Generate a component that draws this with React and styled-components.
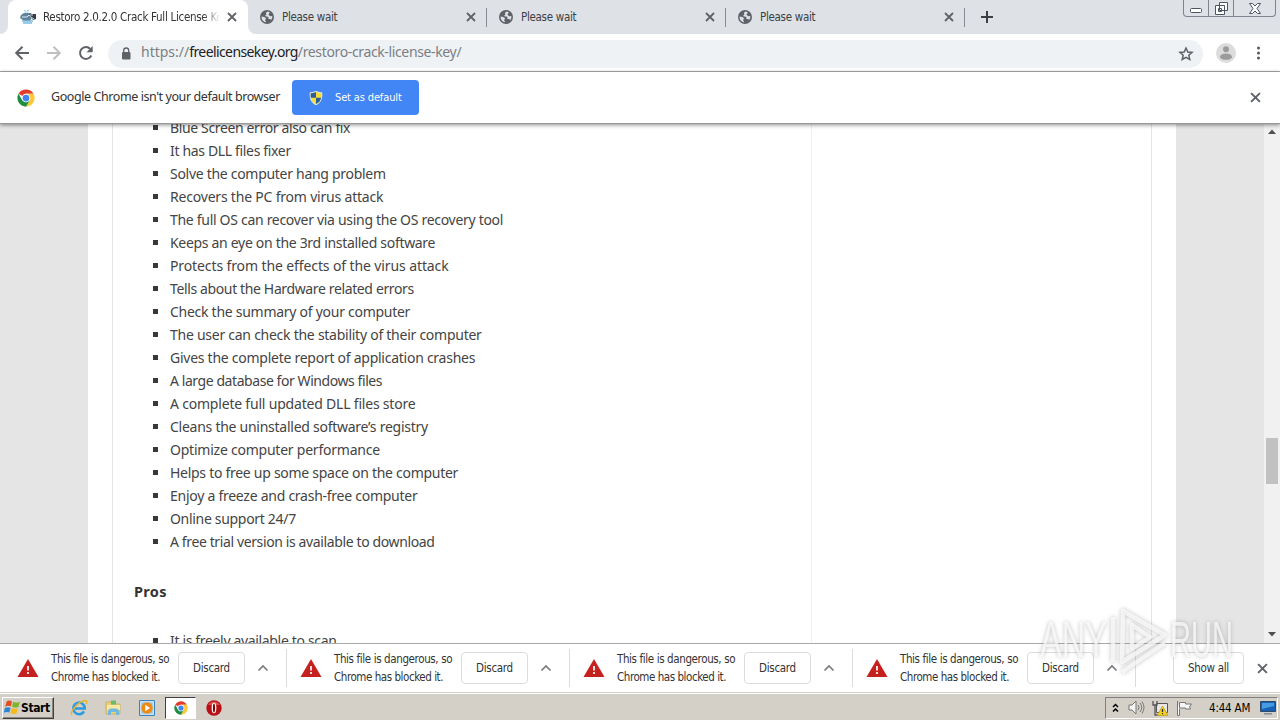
import React from "react";
import styled, { createGlobalStyle, css } from "styled-components";

const Global = createGlobalStyle`
  * { box-sizing: border-box; }
  html, body { margin: 0; padding: 0; overflow: hidden; }
  body { width: 1280px; height: 720px; }
`;

const ui = css`
  font-family: "DejaVu Sans Condensed", "DejaVu Sans", sans-serif;
  font-stretch: condensed;
  font-size: 11px;
  white-space: nowrap;
`;

const Screen = styled.div`
  ${ui}
  position: relative;
  width: 1280px;
  height: 720px;
  display: flex;
  flex-direction: column;
  overflow: hidden;
  background: #fff;
  color: #333;
`;

/* ---- tab strip ---- */
const TabStrip = styled.header`
  flex: none;
  height: 34px;
  display: flex;
  background: #dee1e6;
`;

const StripEdge = styled.div`
  width: 8px;
  background: #fff;
  &::before {
    content: "";
    display: block;
    height: 34px;
    background: #dee1e6;
    border-bottom-right-radius: 8px;
  }
`;

const ActiveTab = styled.div`
  width: 240px;
  height: 34px;
  display: flex;
  align-items: center;
  padding: 0 11px 0 12px;
  background: #fff;
  border-radius: 8px 8px 0 0;
`;

const Tab = styled.div`
  width: 239px;
  height: 34px;
  display: flex;
  align-items: center;
  padding-left: 12px;
  color: #3c4043;
  background: #dee1e6;
  ${(p) => p.$first && "border-bottom-left-radius: 8px;"}
`;

const TabBacking = styled.div`
  background: linear-gradient(90deg, #fff 10px, transparent 10px);
`;

const TabTitle = styled.span`
  flex: 1;
  overflow: hidden;
  margin-left: ${(p) => (p.$active ? 7 : 8)}px;
  margin-right: ${(p) => (p.$active ? 8 : 0)}px;
  letter-spacing: -0.3px;
  font-size: 11.5px;
  ${(p) => p.$active && "mask-image: linear-gradient(90deg, #000 160px, transparent 177px);"}
`;

const Divider = styled.div`
  width: 1px;
  height: 19px;
  background: #878b92;
  margin-left: 10px;
  flex: none;
`;

const NewTab = styled.div`
  display: flex;
  align-items: center;
  padding-left: 16px;
  flex: 1;
`;

const WindowControls = styled.div`
  display: flex;
  width: 93px;
  height: 17px;
  margin-right: 4px;
  border: 1px solid #7e838d;
  border-top: 0;
  border-radius: 0 0 4px 4px;
`;

const WindowButton = styled.div`
  width: ${(p) => p.$w}px;
  display: flex;
  align-items: center;
  justify-content: center;
  & + & { border-left: 1px solid #7e838d; }
`;

/* ---- toolbar ---- */
const Toolbar = styled.div`
  flex: none;
  height: 38px;
  display: flex;
  align-items: center;
  padding: 0 12px 0 14px;
  border-bottom: 1px solid #a9a9a9;
`;

const NavIcons = styled.div`
  display: flex;
  gap: 16px;
  width: 94px;
`;

const AddressBar = styled.div`
  width: 1095px;
  height: 28px;
  margin-top: 2px;
  display: flex;
  align-items: center;
  padding: 0 9px 0 11px;
  border-radius: 14px;
  background: #eff2f5;
`;

const Url = styled.div`
  flex: 1;
  margin-left: 8px;
  margin-top: -4px;
  font: 14px "Noto Sans", sans-serif;
  color: #7b7f84;
`;

const UrlPart = styled.span`
  letter-spacing: ${(p) => p.$track}px;
  ${(p) => p.$host && "color: #202124;"}
`;

const ToolbarEnd = styled.div`
  display: flex;
  align-items: center;
  gap: 15px;
  margin-left: 13px;
`;

/* ---- default browser notice ---- */
const Notice = styled.div`
  position: relative;
  z-index: 1;
  flex: none;
  height: 52px;
  display: flex;
  align-items: center;
  padding: 0 19px 0 17px;
  background: #fff;
  border-bottom: 1px solid #989898;
  box-shadow: 0 1px 4px rgba(0, 0, 0, 0.45);
`;

const NoticeText = styled.span`
  flex: none;
  width: 257px;
  padding-left: 16px;
  margin-top: -2px;
  font: 12.5px "Noto Sans", sans-serif;
  letter-spacing: -0.42px;
`;

const DefaultButton = styled.div`
  width: 127px;
  height: 35px;
  display: flex;
  align-items: center;
  padding-left: 17px;
  gap: 12px;
  color: #fff;
  background: #4285f4;
  border-radius: 4px;
  letter-spacing: -0.14px;
`;

const Spacer = styled.div`
  flex: 1;
`;

/* ---- page ---- */
const Viewport = styled.main`
  flex: none;
  height: 519px;
  display: flex;
  overflow: hidden;
  background: #e5e5e5;
`;

const Sheet = styled.div`
  width: 1088px;
  margin-left: 88px;
  padding: 0 24px;
  background: #fff;
`;

const Columns = styled.div`
  display: flex;
  height: 100%;
  border: solid #e4e4e4;
  border-width: 0 1px;
`;

const Article = styled.article`
  width: 699px;
  padding-left: 21px;
  border-right: 1px solid #efefef;
  color: #444;
  font: 14px/23px "Noto Sans", sans-serif;
`;

const List = styled.ul`
  list-style: none;
  margin: ${(p) => p.$top}px 0 0;
  padding: 0 0 0 18px;
`;

const Item = styled.li`
  display: flex;
  align-items: center;
  height: 23px;
  letter-spacing: ${(p) => p.$track}px;
  &::before {
    content: "";
    width: 5px;
    height: 5px;
    margin: 0 12px 0 1px;
    background: #383838;
  }
`;

const Heading = styled.h3`
  margin: 25px 0 0;
  font-size: 14.5px;
  line-height: 26px;
  letter-spacing: 0.3px;
  color: #333;
`;

const Scrollbar = styled.div`
  width: 16px;
  margin-left: auto;
  display: flex;
  flex-direction: column;
  align-items: center;
  padding: 5px 0 6px;
  background: #f1f1f1;
`;

const Thumb = styled.div`
  width: 12px;
  height: 46px;
  margin: 304px 0 auto;
  background: #c1c1c1;
`;

/* ---- downloads ---- */
const Shelf = styled.footer`
  flex: none;
  height: 49px;
  display: flex;
  align-items: center;
  border-top: 1px solid #a9a9a9;
`;

const Download = styled.div`
  width: ${(p) => (p.$first ? 287 : 283)}px;
  height: 38px;
  display: flex;
  align-items: center;
  padding-left: ${(p) => (p.$first ? 17 : 13)}px;
  border-right: 1px solid #dcdcdc;
`;

const Warning = styled.div`
  width: 127px;
  margin-left: 12px;
  line-height: 18px;
  font-size: 11.5px;
`;

const WarningLine = styled.div`
  letter-spacing: ${(p) => p.$track}px;
`;

const ShelfButton = styled.div`
  width: ${(p) => p.$w || 67}px;
  height: 32px;
  display: flex;
  align-items: center;
  justify-content: center;
  border: 1px solid #dadce0;
  border-radius: 4px;
  font-size: 11.5px;
  letter-spacing: -0.3px;
`;

const Chevron = styled.span`
  display: flex;
  margin-left: 12px;
`;

const ShelfEnd = styled.div`
  display: flex;
  align-items: center;
  margin-left: 37px;
  gap: 13px;
`;

/* ---- taskbar ---- */
const Taskbar = styled.div`
  flex: none;
  height: 28px;
  display: flex;
  align-items: center;
  padding: 2px 2px 0;
  background: #d4d0c8;
  border-top: 1px solid #d4d0c8;
  box-shadow: inset 0 1px #fff;
  color: #000;
`;

const Start = styled.div`
  width: 52px;
  height: 22px;
  display: flex;
  align-items: center;
  padding-left: 1px;
  border: 1px solid;
  border-color: #fff #404040 #404040 #fff;
  box-shadow: inset -1px -1px #8a8780;
  font-weight: 700;
  font-size: 12px;
  letter-spacing: -0.4px;
`;

const Launchers = styled.div`
  display: flex;
  align-items: center;
  margin-left: 8px;
`;

const Launcher = styled.div`
  width: ${(p) => (p.$active ? 31 : 34)}px;
  height: 22px;
  display: flex;
  align-items: center;
  justify-content: center;
  ${(p) =>
    p.$active &&
    css`
      margin: 0 1px;
      background: #fff;
      border: 1px solid;
      border-color: #404040 #fff #fff #404040;
    `}
`;

const Tray = styled.div`
  width: 173px;
  height: 22px;
  margin-left: auto;
  display: flex;
  align-items: center;
  padding-left: 6px;
  border: 1px solid;
  border-color: #808080 #fff #fff #808080;
`;

const Clock = styled.span`
  width: 51px;
  margin-left: 16px;
  font-size: 11.5px;
  letter-spacing: -0.2px;
`;

const TrayIcon = styled.span`
  display: flex;
  margin-left: ${(p) => p.$left}px;
`;

/* ---- watermark ---- */
const Watermark = styled.div`
  position: absolute;
  z-index: 3;
  left: 1040px;
  top: 608px;
  height: 68px;
  display: flex;
  align-items: flex-start;
  color: rgba(255, 255, 255, 0.72);
  filter: drop-shadow(0 0 2px rgba(110, 110, 110, 0.6));
`;

const WatermarkWord = styled.span`
  width: ${(p) => p.$w}px;
  padding-top: 6px;
  font: 50px/52px "Liberation Sans Narrow", "Liberation Sans", sans-serif;
  transform: scaleX(${(p) => p.$scale});
  transform-origin: 0 0;
`;

/* ---- drawings ---- */
const Cross = ({ size = 9, color = "#5f6368", w = 1.8 }) => (
  <svg width={size} height={size} viewBox="0 0 10 10">
    <path d="M1 1l8 8M9 1l-8 8" stroke={color} strokeWidth={w} />
  </svg>
);

const Globe = () => (
  <svg width="14" height="14" viewBox="0 0 14 14">
    <circle cx="7" cy="7" r="7" fill="#5f6368" />
    <path d="M7.6 1.6c-1 .6-1.8 1.300-1.600 2.200.8.5.3 1.400-.6 1.500-.4.900.5 1.300 1.500 1.200 1.300 0 1.900.9 1.500 1.700-.4.600.4 1 1.300.8 1.100.1 1.500.8 1.200 1.600A5.500 5.500 0 0 0 12.300 6L10.400 6.300C9.200 6.200 9.600 4.900 8.300 4.500 9 3.700 9.600 3.100 9.600 2.200zM1.600 6.600c1.600.1 3.400.7 4.400 1.600-.3 1.300-1 1.600-.8 2.300.5.3.8.900.8 1.800C3.300 12 1.400 9.800 1.600 6.600z" fill="#dee1e6" />
  </svg>
);

const Chrome = ({ size }) => (
  <svg width={size} height={size} viewBox="0 0 48 48">
    <circle cx="24" cy="24" r="23" fill="#fff" />
    <path d="M24 24L4.100 12.500A23 23 0 0 1 43.900 12.500H24z" fill="#e33b2e" />
    <path d="M43.900 12.500A23 23 0 0 1 24 47L34 29.700 24 12.500z" fill="#fcc934" />
    <path d="M24 47A23 23 0 0 1 4.100 12.500L14 29.700 24 35.500 34 29.700z" fill="#1e8e3e" />
    <circle cx="24" cy="24" r="11.500" fill="#fff" />
    <circle cx="24" cy="24" r="9" fill="#4285f4" />
  </svg>
);

const Favicon = () => (
  <svg width="16" height="16" viewBox="0 0 16 16">
    <path d="M4 1.500h1.500M7 1.500h2M4.500 3h4" stroke="#9cc9e4" />
    <path d="M1 6l3-2h7l2 3-3 5H4L0 9z" fill="#63839a" />
    <path d="M2 8h5l2-2 3 3" stroke="#d8ecf7" fill="none" />
    <path d="M9 5h7v5l-3 1-2-3z" fill="#343b48" />
    <path d="M10 6h3M11 8l3 2" stroke="#ccd8df" />
    <path d="M2 12h11M3 14h9" stroke="#7ab9dd" strokeWidth="1.300" />
  </svg>
);

const Arrow = ({ flip, color }) => (
  <svg width="16" height="16" viewBox="0 0 16 16">
    <path transform={flip ? "translate(16 0) scale(-1 1)" : undefined} d="M15 8H2.500M8.500 1.700L2.200 8l6.300 6.300" fill="none" stroke={color} strokeWidth="2" />
  </svg>
);

const Reload = () => (
  <svg width="16" height="16" viewBox="0 0 16 16">
    <path d="M13.300 10.500A5.900 5.900 0 1 1 12.300 4" fill="none" stroke="#5f6368" strokeWidth="2" />
    <path d="M14.700 1v6.200H8.500z" fill="#5f6368" />
  </svg>
);

const Lock = () => (
  <svg width="14" height="14" viewBox="0 0 14 14">
    <rect x="3" y="5" width="8.500" height="7.500" rx="1" fill="#5f6368" />
    <path d="M4.700 5.500V3.500a2.500 2.500 0 0 1 5 0v2" fill="none" stroke="#5f6368" strokeWidth="1.300" />
  </svg>
);

const Star = () => (
  <svg width="16" height="16" viewBox="0 0 16 16">
    <path d="M8 2l1.800 4 4.300.4-3.300 2.900 1 4.200L8 11.300l-3.800 2.200 1-4.200-3.300-2.900L6.200 6z" fill="none" stroke="#5f6368" strokeWidth="1.500" />
  </svg>
);

const Avatar = () => (
  <svg width="20" height="20" viewBox="0 0 20 20">
    <circle cx="10" cy="10" r="10" fill="#dcdcdc" />
    <circle cx="10" cy="6.200" r="3" fill="#9b9b9b" />
    <ellipse cx="10" cy="13.700" rx="6" ry="3.100" fill="#9b9b9b" />
  </svg>
);

const Dots = () => (
  <svg width="14" height="16" viewBox="0 0 14 16">
    <circle cx="7.500" cy="3" r="1.500" fill="#55595e" />
    <circle cx="7.500" cy="8" r="1.500" fill="#55595e" />
    <circle cx="7.500" cy="13" r="1.500" fill="#55595e" />
  </svg>
);

const Shield = () => (
  <svg width="14" height="16" viewBox="0 0 14 16">
    <path d="M7 1.300c2 1 4 1.400 5.800 1.400C13.200 8 12 12.500 7 14.800 2 12.500.8 8 1.200 2.700 3 2.700 5 2.300 7 1.300z" fill="#f7dc3a" stroke="#dfe8ee" />
    <path d="M7 2v5.800H1.900C1.600 6.500 1.600 4.800 1.800 3.300 3.600 3.200 5.300 2.800 7 2zM7 7.800h5.100C11.500 10.500 10 12.700 7 14.100z" fill="#2a5f9e" />
  </svg>
);

const Triangle = ({ down }) => (
  <svg width="8" height="5" viewBox="0 0 8 5">
    <path d={down ? "M0 0h8L4 4.500z" : "M0 5h8L4 .5z"} fill="#505050" />
  </svg>
);

const Danger = () => (
  <svg width="22" height="20" viewBox="0 0 22 20">
    <path d="M11 1l10.500 18H.5z" fill="#c5221f" />
    <path d="M11 8v4.500M11 14v2" stroke="#fff" strokeWidth="1.700" />
  </svg>
);

const Up = () => (
  <svg width="12" height="8" viewBox="0 0 12 8">
    <path d="M1.500 6.500L6 2l4.500 4.500" fill="none" stroke="#777b80" strokeWidth="1.700" />
  </svg>
);

const Flag = () => (
  <svg width="17" height="17" viewBox="0.500 1 15 14">
    <path d="M3 2.500c2-1.200 3-.5 4.500.2L6.600 7C5 6.300 3.500 6 1.500 7.300z" fill="#e64a20" />
    <path d="M8.500 3c2 .9 3.500 1 6 0l-1.300 4.500c-2 .9-3.500.7-5.500-.2z" fill="#7db62b" />
    <path d="M1.300 8.500C3 7.400 4.700 7.600 6.300 8.300L5.200 12.500c-1.500-.7-3-.8-5 .2z" fill="#2d86d4" />
    <path d="M7.300 8.500c2 .8 3.500 1 5.500.1l-1.200 4.500c-2 .9-3.500.6-5.400-.3z" fill="#f5bb1b" />
  </svg>
);

const Explorer = () => (
  <svg width="18" height="18" viewBox="0 0 18 18">
    <path d="M14 12.300A5.800 5.800 0 1 1 14.800 9.500H5" fill="none" stroke="#2e9be0" strokeWidth="2.500" />
    <path d="M2 16C-.5 13 8 2.500 15 1.500c2.500-.2 2 2 1 3.500" fill="none" stroke="#e6b52d" strokeWidth="1.300" />
  </svg>
);

const Folder = () => (
  <svg width="17" height="17" viewBox="0 0 17 17">
    <path d="M1 3h5l1 2h8v10H1z" fill="#e9d279" stroke="#cdb260" />
    <path d="M6 1.500h5v4H6z" fill="#67bd69" />
    <path d="M2 6h13v5H2z" fill="#f8e9a3" />
    <path d="M3 16v-4.500l2-2h7l2 2V16h-3v-3H6v3z" fill="#72b9df" />
  </svg>
);

const Player = () => (
  <svg width="16" height="16" viewBox="0 0 16 16">
    <path d="M.5.5h15v15H.5z" fill="#c8e1f4" stroke="#3983bd" />
    <path d="M2.500 2.500h11v11h-11z" fill="#93c2e7" />
    <circle cx="8" cy="8" r="5.700" fill="#ef8b12" />
    <path d="M6.300 4.800L11 8l-4.700 3.200z" fill="#fff" />
  </svg>
);

const Opera = () => (
  <svg width="16" height="16" viewBox="0 0 16 16">
    <circle cx="8" cy="8" r="7.700" fill="#b90f15" />
    <path d="M2 5a7 7 0 0 1 12 0z" fill="#d94a4b" />
    <ellipse cx="8" cy="8" rx="2.400" ry="5.300" fill="#fff" />
    <ellipse cx="8" cy="8" rx="1.100" ry="4.500" fill="#7d080b" />
  </svg>
);

const Speaker = () => (
  <svg width="17" height="15" viewBox="0 0 17 15">
    <path d="M1 5h3l4-4v13l-4-4H1z" fill="#f4f4f4" stroke="#777" />
    <path d="M10 5q2 2.500 0 5M12 3q3.500 4.500 0 9M14 1.500q4 6 0 12" fill="none" stroke="#777" />
  </svg>
);

const Network = () => (
  <svg width="17" height="16" viewBox="0 0 17 16">
    <path d="M4.500 3.500h11v9h-11z" fill="#e7e7e7" stroke="#555" />
    <path d="M1 1v4h4V1M3 5v10h4" fill="none" stroke="#555" strokeWidth="1.300" />
    <path d="M10.500 6l5.500 9.500H5z" fill="#f4d022" stroke="#b69912" strokeWidth=".7" />
    <path d="M10.500 9v3M10.500 13v1.300" stroke="#333" strokeWidth="1.300" />
  </svg>
);

const Pennant = () => (
  <svg width="17" height="16" viewBox="0 0 17 16">
    <path d="M1.500 1v14.500h2V9" fill="#fff" stroke="#777" />
    <path d="M3.500 2.500h6v1.500h6l-2 3 1 2h-5V8h-6z" fill="#f7f7f7" stroke="#777" />
  </svg>
);

const Monitor = () => (
  <svg width="16" height="15" viewBox="0 0 16 15">
    <path d="M.5 1.500h15v10H.5z" fill="#1761b4" stroke="#2d4967" />
    <path d="M2 3h12v3L2 9z" fill="#459be4" />
    <path d="M4 13h8v1.500H4z" fill="#7c8c9b" />
  </svg>
);

const DoubleUp = () => (
  <svg width="7" height="10" viewBox="0 0 7 10">
    <path d="M1 4l2.500-2.500L6 4M1 8.500L3.500 6 6 8.500" fill="none" stroke="#000" strokeWidth="1.500" />
  </svg>
);

const PlayMark = () => (
  <svg width="60" height="68" viewBox="0 0 60 68">
    <path d="M3 9v45M13 3l42 24-43 27zM22 17v24l18-12zM12 64l43-29" fill="none" stroke="currentColor" strokeWidth="4.500" strokeLinejoin="round" />
  </svg>
);

const features = [
  ["Blue Screen error also can fix", -0.36],
  ["It has DLL files fixer", -0.34],
  ["Solve the computer hang problem", -0.29],
  ["Recovers the PC from virus attack", -0.2],
  ["The full OS can recover via using the OS recovery tool", -0.3],
  ["Keeps an eye on the 3rd installed software", -0.31],
  ["Protects from the effects of the virus attack", -0.11],
  ["Tells about the Hardware related errors", -0.37],
  ["Check the summary of your computer", -0.27],
  ["The user can check the stability of their computer", -0.26],
  ["Gives the complete report of application crashes", -0.26],
  ["A large database for Windows files", -0.43],
  ["A complete full updated DLL files store", -0.2],
  ["Cleans the uninstalled software’s registry", -0.26],
  ["Optimize computer performance", -0.23],
  ["Helps to free up some space on the computer", -0.28],
  ["Enjoy a freeze and crash-free computer", -0.26],
  ["Online support 24/7", -0.31],
  ["A free trial version is available to download", -0.38],
];

export default function App() {
  return (
    <Screen>
      <Global />
      <TabStrip>
        <StripEdge />
        <ActiveTab>
          <Favicon />
          <TabTitle $active>Restoro 2.0.2.0 Crack Full License Key</TabTitle>
          <Cross size={10} />
        </ActiveTab>
        <TabBacking>
          <Tab $first>
            <Globe />
            <TabTitle>Please wait</TabTitle>
            <Cross size={10} />
            <Divider />
          </Tab>
        </TabBacking>
        {[2, 3].map((n) => (
          <Tab key={n}>
            <Globe />
            <TabTitle>Please wait</TabTitle>
            <Cross size={10} />
            <Divider />
          </Tab>
        ))}
        <NewTab>
          <svg width="12" height="12" viewBox="0 0 12 12">
            <path d="M6 0v12M0 6h12" stroke="#3c4043" strokeWidth="2" />
          </svg>
        </NewTab>
        <WindowControls>
          <WindowButton $w={24}>
            <svg width="12" height="12"><rect x=".5" y="6.500" width="11" height="4" rx="1" fill="#fff" stroke="#4d5462" /></svg>
          </WindowButton>
          <WindowButton $w={25}>
            <svg width="13" height="13"><path d="M4.500.5h8v8h-8zM.5 3.500h9v9h-9zM3.500 6.500h3v3h-3z" fill="#fff" stroke="#4d5462" /></svg>
          </WindowButton>
          <WindowButton $w={42}>
            <svg width="12" height="11"><path d="M.5.5h3L6 3 8.500.5h3L8 5.500l3.500 5h-3L6 8l-2.500 2.500h-3L4 5.500z" fill="#fff" stroke="#4d5462" /></svg>
          </WindowButton>
        </WindowControls>
      </TabStrip>

      <Toolbar>
        <NavIcons>
          <Arrow color="#5f6368" />
          <Arrow flip color="#bdbfc1" />
          <Reload />
        </NavIcons>
        <AddressBar>
          <Lock />
          <Url>
            <UrlPart $track={0}>https://</UrlPart>
            <UrlPart $host $track={-0.6}>freelicensekey.org</UrlPart>
            <UrlPart $track={-0.36}>/restoro-crack-license-key/</UrlPart>
          </Url>
          <Star />
        </AddressBar>
        <ToolbarEnd>
          <Avatar />
          <Dots />
        </ToolbarEnd>
      </Toolbar>

      <Notice>
        <Chrome size={18} />
        <NoticeText>Google Chrome isn't your default browser</NoticeText>
        <DefaultButton><Shield />Set as default</DefaultButton>
        <Spacer />
        <Cross size={11} />
      </Notice>

      <Viewport>
        <Sheet>
          <Columns>
            <Article>
              <List $top={-8}>
                {features.map(([text, track]) => <Item key={text} $track={track}>{text}</Item>)}
              </List>
              <Heading>Pros</Heading>
              <List $top={25}><Item $track={-0.34}>It is freely available to scan</Item></List>
            </Article>
          </Columns>
        </Sheet>
        <Scrollbar><Triangle /><Thumb /><Triangle down /></Scrollbar>
      </Viewport>

      <Shelf>
        {[0, 1, 2, 3].map((n) => (
          <Download key={n} $first={n === 0}>
            <Danger />
            <Warning>
              <WarningLine $track={-0.38}>This file is dangerous, so</WarningLine>
              <WarningLine $track={-0.45}>Chrome has blocked it.</WarningLine>
            </Warning>
            <ShelfButton>Discard</ShelfButton>
            <Chevron><Up /></Chevron>
          </Download>
        ))}
        <ShelfEnd>
          <ShelfButton $w={71}>Show all</ShelfButton>
          <Cross size={11} />
        </ShelfEnd>
      </Shelf>

      <Taskbar>
        <Start><Flag />Start</Start>
        <Launchers>
          <Launcher><Explorer /></Launcher>
          <Launcher><Folder /></Launcher>
          <Launcher><Player /></Launcher>
          <Launcher $active><Chrome size={14} /></Launcher>
          <Launcher><Opera /></Launcher>
        </Launchers>
        <Tray>
          <DoubleUp />
          <TrayIcon $left={9}><Speaker /></TrayIcon>
          <TrayIcon $left={7}><Network /></TrayIcon>
          <TrayIcon $left={7}><Pennant /></TrayIcon>
          <Clock>4:44 AM</Clock>
          <Monitor />
        </Tray>
      </Taskbar>

      <Watermark>
        <WatermarkWord $w={70} $scale={0.65}>ANY</WatermarkWord>
        <PlayMark />
        <WatermarkWord $w={66} $scale={0.58}>RUN</WatermarkWord>
      </Watermark>
    </Screen>
  );
}
